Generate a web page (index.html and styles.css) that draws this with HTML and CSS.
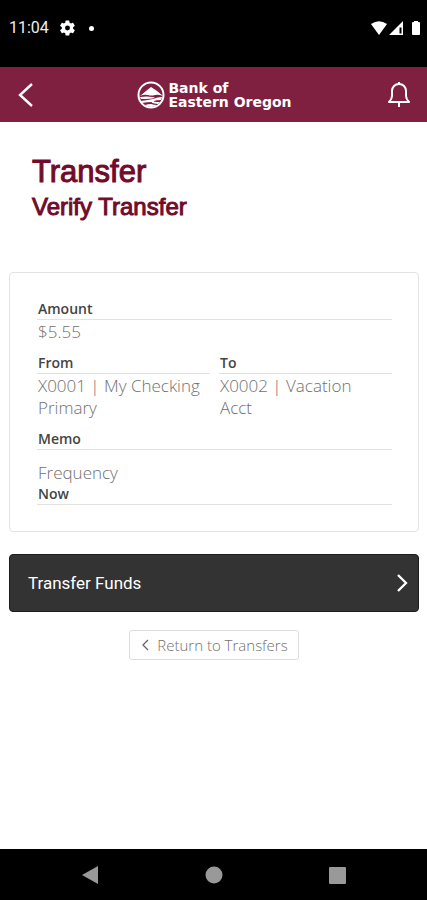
FILE: index.html
```html
<!DOCTYPE html>
<html lang="en">
<head>
<meta charset="utf-8">
<meta name="viewport" content="width=device-width, initial-scale=1">
<title>Verify Transfer</title>
<link rel="stylesheet" href="styles.css">
</head>
<body>
<div class="status">
  <span class="clock">11:04</span>
  <svg class="gear" width="15" height="16" viewBox="2 2 20 20" aria-hidden="true"><path fill="#fff" d="M19.4 13c0-.3.1-.6.1-1s0-.7-.1-1l2.100-1.600c.2-.2.300-.4.1-.6l-2-3.500c-.1-.2-.4-.3-.6-.2l-2.500 1c-.5-.4-1.100-.7-1.700-1l-.4-2.600c0-.3-.2-.5-.5-.5h-4c-.3 0-.5.2-.5.4L9 5.100c-.6.200-1.200.6-1.700 1l-2.500-1c-.2-.1-.5 0-.6.200l-2 3.500c-.1.200-.1.400.1.600L4.500 11c0 .3-.1.700-.1 1s0 .7.1 1l-2.200 1.600c-.2.200-.2.400-.1.600l2 3.500c.1.200.4.300.6.200l2.500-1c.5.400 1.100.7 1.700 1l.4 2.600c0 .3.200.5.500.5h4c.3 0 .5-.2.500-.4l.4-2.700c.6-.2 1.200-.6 1.700-1l2.500 1c.2.100.5 0 .6-.2l2-3.500c.1-.2.100-.4-.1-.6zM12 15.300a3.300 3.300 0 1 1 0-6.600 3.300 3.300 0 0 1 0 6.600z"/></svg>
  <span class="dot"></span>
  <svg class="signals" width="50" height="16" viewBox="0 0 50 16" aria-hidden="true">
    <g fill="#fff"><path d="M0 4Q8-1.500 16 4L8 15z"/><path fill-rule="evenodd" d="M32 1v14H18zM28.500 7.500v6h2v-6z"/><path d="M43 1h4v1h1q1 0 1 1v11q0 1-1 1h-6q-1 0-1-1V3q0-1 1-1h1z"/></g>
  </svg>
</div>
<header class="bar">
  <button class="icon" aria-label="Back"><svg width="16" height="26" viewBox="0 0 16 26"><path d="M14 2L2 13l12 11" fill="none" stroke="#fff" stroke-width="2.400"/></svg></button>
  <div class="brand">
    <svg width="28" height="28" viewBox="0 0 28 28" aria-hidden="true">
      <circle cx="14" cy="14" r="12.500" fill="none" stroke="#fff" stroke-width="2"/>
      <path fill="#fff" d="M3 15l6-5 5-4 6 4 6 5q-5-2-8-1-4 1-7 0-4-1-8 1z"/>
      <path fill="#fff" d="M3 16q7-1 12 0 4 0 2 1-3 1-13 1zM4 20q7-1 12-2 5-2 9-2l-1 3q-5 0-7 1-2 1 6 1l-2 2q-8-1-6-2-5 0-10 1zM8 24q3-1 6-1 3 1 6 1-6 4-12 0z"/>
    </svg>
    <span class="name">Bank of<br>Eastern Oregon</span>
  </div>
  <button class="icon" aria-label="Notifications"><svg width="24" height="28" viewBox="0 0 24 28"><path d="M2 21h20q-3-3-3-6v-5c0-4-3-7-7-7s-7 3-7 7v5q0 3-3 6z" fill="none" stroke="#fff" stroke-width="2" stroke-linejoin="round"/><path d="M12 1v2M12 21v5" stroke="#fff" stroke-width="2"/></svg></button>
</header>
<main>
  <div class="heading"><h1>Transfer</h1><h2>Verify Transfer</h2></div>
  <dl class="card">
    <div><dt>Amount</dt><dd>$5.55</dd></div>
    <div class="pair">
      <div><dt>From</dt><dd>X0001 | My Checking Primary</dd></div>
      <div><dt>To</dt><dd>X0002 | Vacation Acct</dd></div>
    </div>
    <div><dt>Memo</dt><dd class="empty"></dd></div>
    <div class="frequency"><dt>Frequency</dt><dd>Now</dd></div>
  </dl>
  <button class="submit">Transfer Funds<svg width="12" height="20" viewBox="0 0 12 20" aria-hidden="true"><path d="M2 2l8 8-8 8" fill="none" stroke="#fff" stroke-width="2.300"/></svg></button>
  <a class="return" href="#"><svg width="8" height="12" viewBox="0 0 8 12" aria-hidden="true"><path d="M7 1L2 6l5 5" fill="none" stroke="#666" stroke-width="1.300"/></svg>Return to Transfers</a>
</main>
<nav class="system">
  <button aria-label="Back"><svg width="18" height="20" viewBox="0 0 18 20"><path d="M17 1v18L1 10z" fill="#999"/></svg></button>
  <button aria-label="Home"><svg width="18" height="18" viewBox="0 0 18 18"><circle cx="9" cy="9" r="8.500" fill="#999"/></svg></button>
  <button aria-label="Recent apps"><svg width="18" height="18" viewBox="0 0 18 18"><rect x="1" y="1" width="17" height="17" rx="1" fill="#999"/></svg></button>
</nav>
</body>
</html>
```
FILE: styles.css
```css
* { box-sizing: border-box; }
body {
  margin: 0;
  min-height: 100vh;
  display: flex;
  flex-direction: column;
  background: #fff;
  font-family: "Open Sans", sans-serif;
}
button { border: 0; padding: 0; background: none; font: inherit; }
svg { display: block; flex: none; }
.status {
  display: flex;
  align-items: center;
  padding: 16px 0 27px 9px;
  background: #000;
  color: #eee;
}
.clock { font: 16px/24px Roboto, sans-serif; }
.gear { margin-left: 11px; }
.dot { width: 5px; height: 5px; margin-left: 14px; border-radius: 50%; background: #fff; }
.signals { margin-left: auto; margin-right: 6px; }
.bar {
  display: flex;
  align-items: center;
  justify-content: space-between;
  height: 55px;
  padding: 0 16px 0 18px;
  background: #7f2040;
}
.icon { width: 24px; }
.brand { display: flex; align-items: center; gap: 3px; color: #fff; }
.name { font: bold 14px/14px "DejaVu Sans", sans-serif; white-space: nowrap; }
main { flex: 1; padding: 32px 8px 24px 9px; display: flex; flex-direction: column; }
.heading {
  padding-left: 23px;
  margin-bottom: 48px;
  color: #720b2a;
  font-family: "Liberation Sans", sans-serif;
  -webkit-text-stroke: 1px #720b2a;
}
h1, h2 { margin: 0; font-weight: 400; }
h1 { font-size: 31px; line-height: 36px; }
h2 { font-size: 24px; line-height: 34px; }
.card {
  display: flex;
  flex-direction: column;
  gap: 10px;
  margin: 0 0 22px;
  padding: 26px 26px 26px 27px;
  border: 1px solid #e3e3e3;
  border-radius: 4px;
}
dt, .frequency dd {
  border-bottom: 1px solid #e2e2e2;
  padding: 0 1px;
  color: #444;
  font-size: 14px;
  font-weight: 600;
  line-height: 20px;
}
dd, .frequency dt {
  margin: 0;
  padding: 1px 6px 0 1px;
  border: 0;
  color: #707070;
  font-size: 17px;
  font-weight: 300;
  line-height: 22px;
}
.frequency dt, .frequency dd { padding-top: 0; }
.pair { display: grid; grid-template-columns: 1fr 1fr; gap: 9px; }
.empty { height: 2px; }
.submit {
  display: flex;
  align-items: center;
  justify-content: space-between;
  height: 58px;
  padding: 0 10px 0 18px;
  border: 1px solid #1c1c1c;
  border-radius: 4px;
  background: #333;
  color: #fff;
  font: 17px/24px Roboto, sans-serif;
}
.return {
  display: flex;
  align-items: center;
  align-self: center;
  gap: 8px;
  margin-top: 18px;
  padding: 3px 10px 3px 11px;
  border: 1px solid #ddd;
  border-radius: 3px;
  color: #707070;
  font-size: 15px;
  font-weight: 300;
  line-height: 22px;
  text-decoration: none;
}
.system {
  display: flex;
  align-items: center;
  justify-content: space-between;
  height: 51px;
  padding: 0 81px;
  background: #000;
}
```
